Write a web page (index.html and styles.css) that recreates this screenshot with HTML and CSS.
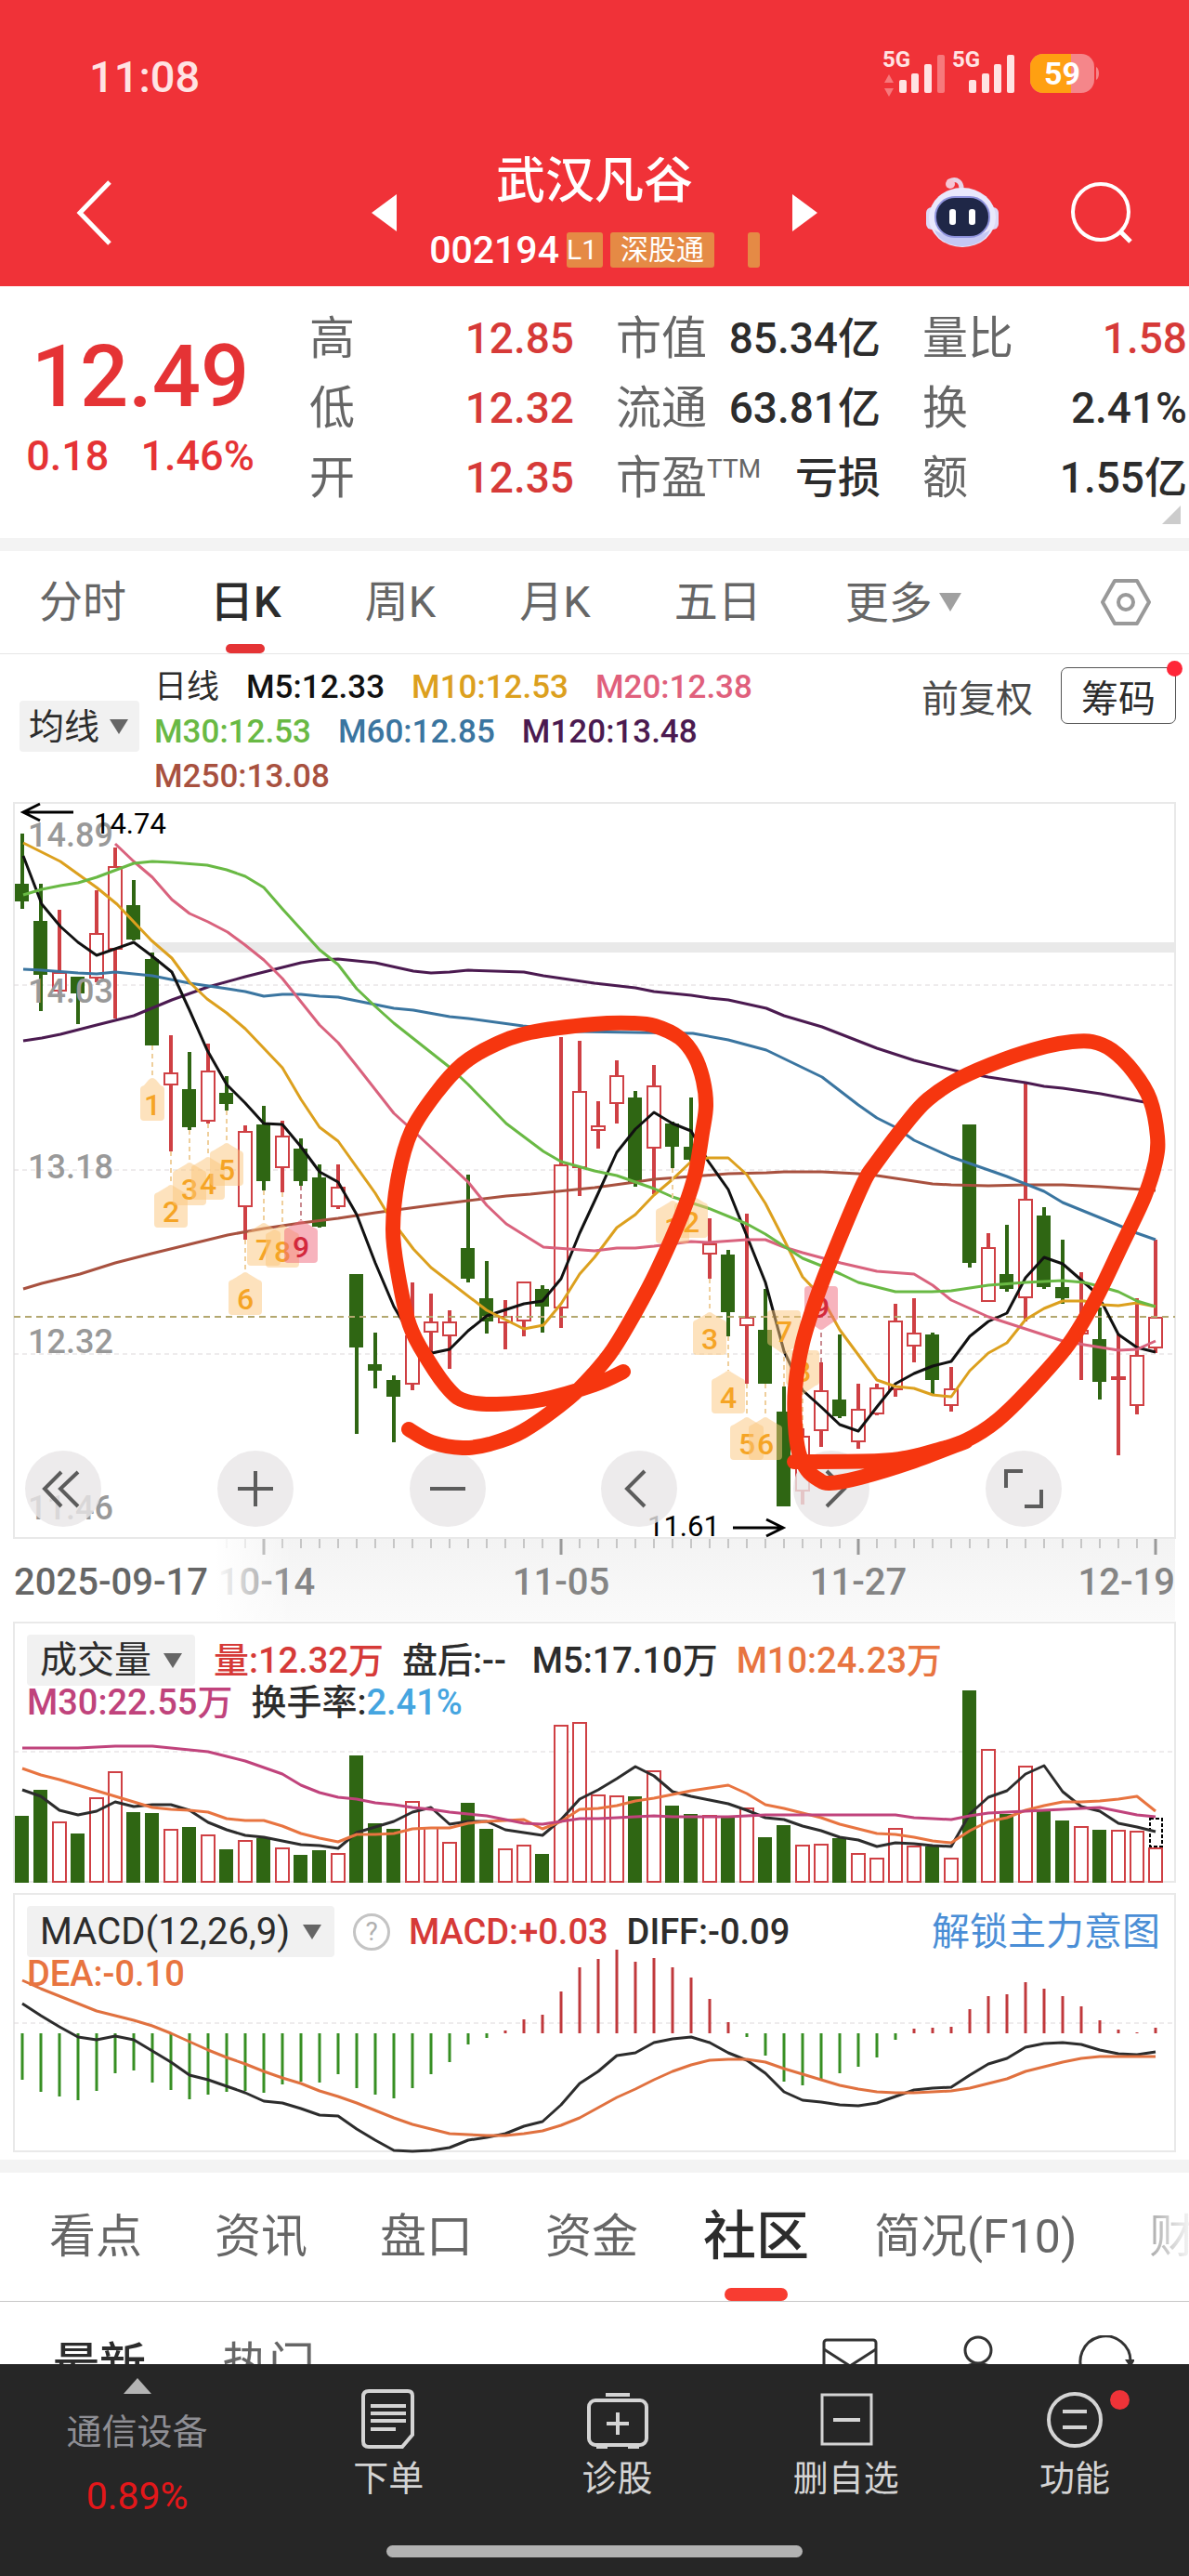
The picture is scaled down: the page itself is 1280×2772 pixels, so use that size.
FILE: index.html
```html
<!DOCTYPE html>
<html lang="zh-CN">
  <head>
    <meta charset="UTF-8" />
    <meta name="viewport" content="width=device-width" />
    <title>武汉凡谷 002194</title>
    <link rel="stylesheet" href="styles.css">
  </head>
  <body>
    <header class="top">
      <div class="status-bar">
        <span class="clock">11:08</span>
        <svg class="status-icons" width="236" height="72" viewBox="0 -6 236 72">
          <g fill="#ffe3e3">
            <text x="0" y="20" class="net">5G</text>
            <text x="75" y="20" class="net">5G</text>
            <path d="M2 37l5-9 5 9zM2 43l5 9 5-9z" opacity=".4" />
            <rect x="18" y="34" width="8" height="14" rx="2" />
            <rect x="31" y="27" width="8" height="21" rx="2" />
            <rect x="45" y="17" width="8" height="31" rx="2" />
            <rect x="59" y="7" width="8" height="41" rx="2" opacity=".4" />
            <rect x="93" y="34" width="8" height="14" rx="2" />
            <rect x="107" y="27" width="8" height="21" rx="2" />
            <rect x="120" y="17" width="8" height="31" rx="2" />
            <rect x="134" y="7" width="8" height="41" rx="2" />
          </g>
          <rect x="159" y="6" width="69" height="42" rx="14" fill="#f5868a" />
          <path d="M173 6h30v42h-30a14 14 0 0 1-14-14V20a14 14 0 0 1 14-14z" fill="#ffa011" />
          <path d="M230 20c4 2 4 12 0 14z" fill="#f5868a" />
          <text x="174" y="39" class="battery">59</text>
        </svg>
      </div>
      <div class="title-bar">
        <button class="icon-btn" aria-label="返回">
          <svg width="44" height="72" viewBox="0 0 44 72"><path d="M38 3L6 36l32 33" fill="none" stroke="#fff" stroke-width="5" /></svg>
        </button>
        <div class="stock">
          <button class="icon-btn" aria-label="上一只">
            <svg width="27" height="40" viewBox="0 0 27 40"><path d="M27 0v40L0 20z" fill="#fff" /></svg>
          </button>
          <div class="stock-name">
            <h1>武汉凡谷</h1>
            <div class="stock-code">
              <span>002194</span>
              <span class="tag tag-cut">L1</span>
              <span class="tag">深股通</span>
              <span class="tag tag-edge"></span>
            </div>
          </div>
          <button class="icon-btn" aria-label="下一只">
            <svg width="27" height="40" viewBox="0 0 27 40"><path d="M0 0v40l27-20z" fill="#fff" /></svg>
          </button>
        </div>
        <div class="title-actions">
          <button class="icon-btn" aria-label="智能助手">
            <svg width="80" height="76" viewBox="0 0 80 76">
              <path d="M26 4c8-4 14 1 13 10" fill="none" stroke="#e7d3e6" stroke-width="5" stroke-linecap="round" />
              <circle cx="27" cy="7" r="5" fill="#f6c5d4" />
              <rect x="1" y="32" width="12" height="24" rx="6" fill="#dcd9f6" />
              <rect x="67" y="32" width="12" height="24" rx="6" fill="#dcd9f6" />
              <ellipse cx="40" cy="43" rx="36" ry="32" fill="#e9e8fc" />
              <path d="M10 56c8 24 52 24 60 0-14 11-46 11-60 0z" fill="#c5c8f4" />
              <rect x="11" y="21" width="58" height="43" rx="21" fill="#1f2747" stroke="#8f93dd" stroke-width="2" />
              <rect x="26" y="34" width="7" height="17" rx="3" fill="#fff" />
              <rect x="47" y="34" width="7" height="17" rx="3" fill="#fff" />
            </svg>
          </button>
          <button class="icon-btn" aria-label="搜索">
            <svg width="68" height="68" viewBox="0 0 68 68"><g fill="none" stroke="#fff" stroke-width="4"><circle cx="33" cy="33" r="30" /><path d="M54 54l11 11" stroke-width="5" /></g></svg>
          </button>
        </div>
      </div>
    </header>

    <section class="quote">
      <div class="price">
        <strong>12.49</strong>
        <div class="change"><span>0.18</span><span>1.46%</span></div>
      </div>
      <dl class="stats">
        <div><dt>高</dt><dd class="up">12.85</dd></div>
        <div><dt>低</dt><dd class="up">12.32</dd></div>
        <div><dt>开</dt><dd class="up">12.35</dd></div>
      </dl>
      <dl class="stats">
        <div><dt>市值</dt><dd>85.34亿</dd></div>
        <div><dt>流通</dt><dd>63.81亿</dd></div>
        <div><dt>市盈<sup>TTM</sup></dt><dd>亏损</dd></div>
      </dl>
      <dl class="stats">
        <div><dt>量比</dt><dd class="up">1.58</dd></div>
        <div><dt>换</dt><dd>2.41%</dd></div>
        <div><dt>额</dt><dd>1.55亿</dd></div>
      </dl>
    </section>

    <nav class="period-tabs">
      <a href="#">分时</a>
      <a href="#" class="active">日K</a>
      <a href="#">周K</a>
      <a href="#">月K</a>
      <a href="#">五日</a>
      <span class="more"><select aria-label="更多周期"><option>更多</option></select></span>
      <button class="icon-btn settings" aria-label="设置">
        <svg width="54" height="54" viewBox="0 0 54 54"><g fill="none" stroke="#999" stroke-width="4" stroke-linejoin="round"><path d="M15 4h24l13 23-13 23H15L2 27z" /><circle cx="27" cy="27" r="8" /></g></svg>
      </button>
    </nav>

    <section class="ma-bar">
      <span class="picker"><select aria-label="主图指标"><option>均线</option></select></span>
      <div class="ma-legend">
        <div><span class="c-dark">日线</span><span class="c-m5">M5:12.33</span><span class="c-m10">M10:12.53</span><span class="c-m20">M20:12.38</span></div>
        <div><span class="c-m30">M30:12.53</span><span class="c-m60">M60:12.85</span><span class="c-m120">M120:13.48</span></div>
        <div><span class="c-m250">M250:13.08</span></div>
      </div>
      <div class="ma-actions">
        <button class="plain-btn">前复权</button>
        <button class="chips-btn">筹码</button>
      </div>
    </section>

    <main class="charts">
      <div class="k-chart">
        <svg id="kline" class="chart" viewBox="15 863 1250 792"></svg>
        <div class="zoom-bar">
          <button aria-label="最早"><svg viewBox="0 0 82 82"><path d="M39 23L21 41l18 19M57 23L38 41l19 19" /></svg></button>
          <button aria-label="放大"><svg viewBox="0 0 82 82"><path d="M41 22v38M22 41h38" /></svg></button>
          <button aria-label="缩小"><svg viewBox="0 0 82 82"><path d="M22 41h38" /></svg></button>
          <button aria-label="向左"><svg viewBox="0 0 82 82"><path d="M47 22L28 41l19 19" /></svg></button>
          <button aria-label="向右"><svg viewBox="0 0 82 82"><path d="M36 22l19 19-19 19" /></svg></button>
          <button aria-label="全屏"><svg viewBox="0 0 82 82"><path d="M22 40V22h18M60 42v18H42" /></svg></button>
        </div>
        <svg id="marks" class="chart marks" viewBox="15 863 1250 792"></svg>
      </div>
      <svg id="axis" class="chart" viewBox="15 1655 1250 90"></svg>

      <div class="sub-chart">
        <svg id="volume" class="chart" viewBox="15 1745 1250 281"></svg>
        <div class="sub-legend">
          <div class="legend-row">
            <span class="picker"><select aria-label="副图指标一"><option>成交量</option></select></span>
            <span class="up">量:12.32万</span>
            <span class="after">盘后:--</span>
            <span>M5:17.10万</span>
            <span class="c-orange">M10:24.23万</span>
          </div>
          <div class="legend-row second">
            <span class="c-magenta">M30:22.55万</span>
            <span>换手率:<b class="c-sky">2.41%</b></span>
          </div>
        </div>
      </div>

      <div class="sub-chart">
        <svg id="macd" class="chart" viewBox="15 2037 1250 279"></svg>
        <div class="sub-legend">
          <div class="legend-row">
            <span class="picker"><select aria-label="副图指标二"><option>MACD(12,26,9)</option></select></span>
            <button class="help" aria-label="指标说明">?</button>
            <span class="up">MACD:+0.03</span>
            <span>DIFF:-0.09</span>
            <a href="#" class="unlock">解锁主力意图</a>
          </div>
          <div class="legend-row second"><span class="c-orange">DEA:-0.10</span></div>
        </div>
      </div>
    </main>

    <nav class="info-tabs">
      <a href="#">看点</a>
      <a href="#">资讯</a>
      <a href="#">盘口</a>
      <a href="#">资金</a>
      <a href="#" class="active">社区</a>
      <a href="#">简况(F10)</a>
      <a href="#" class="faded">财</a>
    </nav>

    <section class="feed-head">
      <a href="#" class="active">最新</a>
      <a href="#">热门</a>
      <div class="feed-actions">
        <button class="icon-btn" aria-label="消息"><svg width="60" height="56" viewBox="0 0 60 56"><g fill="none" stroke="#333" stroke-width="3"><rect x="2" y="5" width="56" height="44" rx="3" /><path d="M2 15l28 18 28-18" /></g></svg></button>
        <button class="icon-btn" aria-label="我的"><svg width="60" height="56" viewBox="0 0 60 56"><g fill="none" stroke="#333" stroke-width="3"><circle cx="30" cy="16" r="14" /><path d="M4 56c0-34 52-34 52 0" /></g></svg></button>
        <button class="icon-btn" aria-label="刷新"><svg width="60" height="56" viewBox="0 0 60 56"><path d="M6 42A27 27 0 1 1 56 29" fill="none" stroke="#333" stroke-width="3" /><path d="M50 26h11l-5 9z" fill="#333" /></svg></button>
      </div>
    </section>

    <nav class="bottom-nav">
      <a href="#" class="sector">
        <svg width="30" height="17" viewBox="0 0 30 17"><path d="M15 0l15 17H0z" fill="#b4b4b4" /></svg>
        <span>通信设备</span>
        <em>0.89%</em>
      </a>
      <a href="#">
        <svg width="66" height="66" viewBox="0 0 66 66"><g fill="none" stroke="#d4d4d4" stroke-width="4"><path d="M12 3h42q5 0 5 5v42L48 63H12q-6 0-6-6V9q0-6 6-6z" /><path d="M14 19h38M14 27h38M14 35h38M14 44h27" /></g></svg>
        <span>下单</span>
      </a>
      <a href="#">
        <svg width="66" height="66" viewBox="0 0 66 66"><g fill="none" stroke="#d4d4d4" stroke-width="4"><rect x="2" y="13" width="62" height="48" rx="7" /><path d="M20 7h26M33 26v24M21 38h24M10 63h12M44 63h12" /></g></svg>
        <span>诊股</span>
      </a>
      <a href="#">
        <svg width="66" height="66" viewBox="0 0 66 66"><g fill="none" stroke="#d4d4d4" stroke-width="3"><rect x="7" y="7" width="53" height="53" /><path d="M19 34h29" stroke-width="4" /></g></svg>
        <span>删自选</span>
      </a>
      <a href="#" class="has-dot">
        <svg width="66" height="66" viewBox="0 0 66 66"><g fill="none" stroke="#d4d4d4" stroke-width="4"><circle cx="33" cy="34" r="28" /><path d="M20 25h26M20 42h26" /></g></svg>
        <span>功能</span>
      </a>
      <div class="home-bar"></div>
    </nav>

    <script src="chart.js"></script>
  </body>
</html>
```
FILE: styles.css
```css
* {
  box-sizing: border-box;
}
body {
  margin: 0;
  min-height: 100vh;
  background: #fff;
  color: #2c2c2c;
  font-family: Roboto, "Noto Sans CJK SC", sans-serif;
  font-size: 38px;
}
a {
  color: inherit;
  text-decoration: none;
}
button,
select {
  font: inherit;
  color: inherit;
  border: none;
  background: none;
  padding: 0;
  margin: 0;
  cursor: pointer;
}
select {
  appearance: none;
}
.icon-btn {
  display: flex;
}
.up {
  color: #d63a38;
}

/* header */
.top {
  height: 308px;
  background: #f03238;
  color: #fff;
}
.status-bar {
  display: flex;
  justify-content: space-between;
  align-items: center;
  height: 150px;
  padding: 14px 94px 0 96px;
}
.clock {
  font-size: 47px;
  font-weight: 500;
  color: #ffe3e3;
}
.net {
  font-size: 24px;
  font-weight: 700;
}
.battery {
  font-size: 34px;
  font-weight: 700;
  fill: #fff;
}
.title-bar {
  display: grid;
  grid-template-columns: 1fr 480px 1fr;
  align-items: center;
  height: 158px;
}
.title-bar > .icon-btn {
  margin-left: 80px;
}
.stock {
  display: flex;
  align-items: center;
}
.stock-name {
  flex: 1;
  text-align: center;
}
.stock-name h1 {
  margin: 0;
  font-size: 53px;
  line-height: 80px;
  font-weight: 500;
}
.stock-code {
  display: flex;
  align-items: center;
  justify-content: flex-end;
  height: 68px;
  margin-right: 35px;
  gap: 8px;
  font-size: 41px;
  font-weight: 500;
}
.tag {
  height: 38px;
  padding: 0 11px;
  background: #e58a45;
  border-radius: 3px;
  font-size: 30px;
  line-height: 38px;
  font-weight: 400;
}
.tag-cut {
  padding: 0 6px 0 0;
}
.tag-edge {
  width: 13px;
  padding: 0;
  margin-left: 28px;
}
.title-actions {
  display: flex;
  align-items: center;
  justify-content: flex-end;
  gap: 76px;
  padding-right: 60px;
}

/* quote */
.quote {
  display: grid;
  grid-template-columns: 288fr 285fr 285fr 285fr;
  gap: 45px;
  padding: 19px 2px 27px 0;
  border-bottom: 14px solid #f3f3f3;
  position: relative;
}
.quote::after {
  content: "";
  position: absolute;
  right: 9px;
  bottom: 15px;
  border-left: 20px solid transparent;
  border-bottom: 20px solid #ccc;
}
.price {
  display: flex;
  flex-direction: column;
  align-items: center;
  padding: 24px 0 0 14px;
  color: #e53335;
}
.price strong {
  font-size: 92px;
  line-height: 110px;
  font-weight: 500;
}
.change {
  display: flex;
  gap: 34px;
  font-size: 45px;
  line-height: 60px;
  font-weight: 500;
}
.stats {
  margin: 0;
}
.stats div {
  display: flex;
  justify-content: space-between;
  line-height: 75px;
}
.stats dt {
  font-size: 49px;
  color: #666;
}
.stats dd {
  margin: 0;
  font-size: 46px;
  font-weight: 500;
}
.stats sup {
  font-size: 28px;
  line-height: 0;
}

/* period tabs */
.period-tabs {
  display: flex;
  align-items: center;
  gap: 90px;
  height: 111px;
  padding: 0 41px 0 42px;
  border-bottom: 1px solid #e6e6e6;
  font-size: 47px;
  color: #666;
}
.period-tabs a {
  line-height: 110px;
  position: relative;
}
.period-tabs .active {
  color: #2c2c2c;
  font-weight: 500;
}
.period-tabs .active::after {
  content: "";
  position: absolute;
  left: 50%;
  bottom: 0;
  width: 42px;
  height: 10px;
  margin-left: -21px;
  border-radius: 5px;
  background: #e53335;
}
.more,
.picker {
  display: flex;
  align-items: center;
  gap: 13px;
}
.more {
  gap: 7px;
}
.more::after,
.picker::after {
  content: "";
  border: 10px solid transparent;
  border-top: 16px solid #666;
  border-bottom: 0;
}
.more::after {
  border-width: 20px 12px 0;
  border-top-color: #a0a0a0;
}
.settings {
  margin-left: auto;
}

/* moving average bar */
.ma-bar {
  display: flex;
  height: 159px;
  padding: 0 14px 0 21px;
}
.picker {
  background: #f1f1f1;
  border-radius: 4px;
  height: 55px;
  padding: 0 14px 0 12px;
}
.ma-bar .picker {
  margin-top: 50px;
  gap: 10px;
  padding: 0 12px 0 10px;
}
.ma-legend {
  margin-left: 16px;
  padding-top: 12px;
  font-size: 35px;
  line-height: 48px;
  font-weight: 500;
  white-space: nowrap;
}
.ma-legend div {
  display: flex;
  gap: 29px;
}
.c-dark {
  font-weight: 400;
}
.c-m5 {
  color: #111;
}
.c-m10 {
  color: #dca01e;
}
.c-m20 {
  color: #e0607c;
}
.c-m30 {
  color: #69b944;
}
.c-m60 {
  color: #3a75a0;
}
.c-m120 {
  color: #4b1a50;
}
.c-m250 {
  color: #a8513f;
}
.c-orange {
  color: #e87440;
}
.c-magenta {
  color: #c0437c;
}
.c-sky {
  color: #45a5e0;
  font-weight: 500;
}
.ma-actions {
  display: flex;
  align-items: flex-start;
  gap: 30px;
  margin-left: auto;
  padding-top: 14px;
  font-size: 40px;
}
.plain-btn {
  height: 61px;
  color: #4a4a4a;
}
.chips-btn {
  position: relative;
  width: 124px;
  height: 61px;
  border: 1px solid #555;
  border-radius: 7px;
}
.chips-btn::after {
  content: "";
  position: absolute;
  top: -8px;
  right: -8px;
  width: 17px;
  height: 17px;
  border-radius: 50%;
  background: #ff2638;
}

/* charts */
.charts {
  padding: 0 15px 8px;
  border-bottom: 14px solid #f3f3f3;
}
.chart {
  display: block;
  width: 100%;
  overflow: visible;
}
.k-chart,
.sub-chart {
  position: relative;
}
.sub-chart + .sub-chart {
  margin-top: 11px;
}
.marks {
  position: absolute;
  inset: 0;
  pointer-events: none;
}
.zoom-bar {
  position: absolute;
  left: 12px;
  right: 122px;
  bottom: 12px;
  display: flex;
  justify-content: space-between;
}
.zoom-bar button {
  width: 82px;
  height: 82px;
  border-radius: 50%;
  background: rgba(232, 230, 231, 0.8);
}
.zoom-bar svg {
  display: block;
  fill: none;
  stroke: #5c5c5c;
  stroke-width: 4;
}
.frame {
  fill: none;
  stroke: #e9e9e9;
  stroke-width: 2;
}
.grid {
  stroke: #ddd8da;
  stroke-width: 1;
  stroke-dasharray: 5 4;
}
.now-line {
  stroke: #b3a870;
  stroke-width: 2;
  stroke-dasharray: 7 5;
}
.line {
  fill: none;
  stroke-width: 3;
  stroke-linejoin: round;
}
.pen {
  fill: none;
  stroke: #f6360f;
  stroke-width: 16;
  stroke-linecap: round;
  stroke-linejoin: round;
}
.y-label {
  font-size: 36px;
  font-weight: 500;
  fill: #999;
}
.peak {
  font-size: 31px;
  fill: #000;
}
.seq {
  font-size: 32px;
  font-weight: 500;
  text-anchor: middle;
}
.date {
  font-size: 40px;
  font-weight: 500;
  fill: #858585;
}
.date.first {
  fill: #666;
}

/* legends over the sub charts */
.sub-legend {
  position: absolute;
  top: 14px;
  left: 14px;
  right: 16px;
  white-space: nowrap;
}
.legend-row {
  display: flex;
  align-items: center;
  gap: 20px;
  height: 55px;
  line-height: 50px;
}
.legend-row > span {
  font-weight: 500;
}
.legend-row > .picker {
  font-weight: 400;
  font-size: 40px;
  padding: 0 14px;
}
.legend-row .after {
  margin-right: 8px;
}
.legend-row.second {
  height: 37px;
  line-height: 37px;
}
.help {
  width: 40px;
  height: 40px;
  border: 3px solid #c4c4c4;
  border-radius: 50%;
  color: #b0b0b0;
  font-size: 28px;
  line-height: 32px;
}
.unlock {
  margin-left: auto;
  font-size: 41px;
  color: #4a8ed6;
}

/* info tabs */
.info-tabs {
  display: flex;
  align-items: center;
  gap: 78px;
  height: 139px;
  padding-left: 53px;
  border-bottom: 1px solid #c8c8c8;
  overflow: hidden;
  white-space: nowrap;
  font-size: 50px;
  line-height: 138px;
  color: #666;
}
.info-tabs .active {
  position: relative;
  margin: 0 -8px;
  font-size: 57px;
  font-weight: 500;
  color: #2c2c2c;
}
.info-tabs .active::after {
  content: "";
  position: absolute;
  left: 50%;
  bottom: 0;
  width: 68px;
  height: 14px;
  margin-left: -34px;
  border-radius: 7px;
  background: #f83c31;
}
.info-tabs .faded {
  background: linear-gradient(90deg, #aaa, #fff);
  background-clip: text;
  color: transparent;
}
.feed-head {
  display: flex;
  gap: 82px;
  padding: 36px 59px 0 57px;
  font-size: 50px;
  line-height: 64px;
  color: #666;
}
.feed-head .active {
  font-weight: 500;
  color: #2c2c2c;
}
.feed-actions {
  display: flex;
  gap: 78px;
  margin-left: auto;
}

/* bottom navigation */
.bottom-nav {
  position: fixed;
  left: 0;
  right: 0;
  bottom: 0;
  display: grid;
  grid-template-columns: 295fr 246fr 246fr 246fr 246fr;
  height: 228px;
  background: #262626;
  color: #d4d4d4;
}
.bottom-nav a {
  display: flex;
  flex-direction: column;
  align-items: center;
  gap: 3px;
  padding-top: 26px;
  line-height: 56px;
  position: relative;
}
.bottom-nav a.sector {
  gap: 13px;
  padding-top: 15px;
  color: #8e8e94;
}
.sector em {
  font-style: normal;
  font-size: 41px;
  color: #e3171a;
}
.has-dot::after {
  content: "";
  position: absolute;
  top: 28px;
  right: 64px;
  width: 21px;
  height: 21px;
  border-radius: 50%;
  background: #ee3338;
}
.home-bar {
  position: absolute;
  left: 50%;
  bottom: 20px;
  width: 35%;
  height: 13px;
  transform: translateX(-50%);
  border-radius: 7px;
  background: #b2b2b2;
}
```
FILE: chart.js
```js
const RED = "#cf4044";
const GREEN = "#2f6613";
const X0 = 24;
const STEP = 20;

// [up, high, low, body top, body bottom]
const candles = [
  [0,897,978,951,970],[0,951,1088,991,1049],[1,979,1070,1046,1067],[0,1051,1102,1051,1069],
  [1,958,1057,1004,1053],[1,912,1096,932,1022],[0,947,1012,974,1011],[0,1025,1125,1032,1125],
  [1,1114,1239,1154,1168],[0,1132,1216,1172,1213],[1,1123,1209,1152,1207],[0,1158,1195,1176,1188],
  [1,1211,1334,1217,1299],[0,1190,1281,1210,1271],[1,1206,1283,1222,1257],[0,1225,1276,1236,1271],
  [0,1253,1321,1267,1320],[1,1253,1301,1277,1299],[0,1371,1543,1371,1450],[0,1434,1494,1468,1475],
  [0,1480,1552,1485,1503],[1,1380,1496,1437,1490],[1,1392,1458,1422,1434],[1,1410,1473,1422,1438],
  [0,1264,1380,1343,1376],[0,1357,1435,1397,1422],[1,1399,1452,1416,1424],[1,1379,1438,1379,1422],
  [0,1383,1434,1387,1406],[1,1116,1429,1253,1408],[1,1120,1287,1174,1257],[1,1185,1236,1211,1217],
  [1,1141,1209,1157,1188],[0,1174,1277,1181,1272],[1,1146,1285,1168,1236],[0,1207,1257,1209,1234],
  [0,1181,1250,1234,1248],[1,1311,1376,1338,1350],[0,1345,1438,1350,1412],[1,1306,1489,1417,1427],
  [0,1387,1489,1431,1489],[0,1492,1621,1519,1621],[1,1537,1619,1545,1605],[1,1466,1557,1496,1540],
  [0,1436,1526,1506,1524],[1,1489,1559,1516,1552],[1,1489,1523,1493,1522],[1,1403,1503,1421,1496],
  [1,1397,1466,1434,1449],[0,1434,1500,1436,1485],[1,1471,1519,1494,1513],[0,1210,1364,1210,1359],
  [1,1327,1401,1342,1401],[0,1318,1390,1371,1387],[1,1166,1422,1290,1397],[0,1299,1387,1308,1385],
  [0,1334,1403,1385,1397],[1,1369,1485,1431,1436],[0,1407,1506,1441,1487],[1,1435,1566,1481,1485],
  [1,1397,1522,1458,1513],[1,1334,1456,1417,1451]
];

const averages = {
  "#a8513f": "25,1387 45,1381 86,1371 124,1359 163,1349 204,1339 245,1329 284,1322 324,1316 364,1311 404,1305 464,1297 504,1292 545,1287 571,1285 640,1278 684,1272 704,1269 744,1266 784,1263 825,1262 844,1261 885,1261 924,1263 944,1265 1004,1274 1024,1275 1064,1276 1104,1275 1144,1275 1185,1277 1244,1281",
  "#4b1a50": "25,1120 45,1117 65,1113 104,1103 144,1093 185,1076 224,1062 264,1051 304,1041 324,1036 344,1033 364,1032 404,1036 445,1045 464,1047 484,1046 504,1044 564,1046 585,1050 640,1058 684,1063 704,1067 744,1071 764,1074 784,1076 825,1085 844,1093 885,1105 944,1128 984,1141 1032,1153 1064,1159 1104,1165 1124,1169 1144,1171 1185,1177 1232,1186 1244,1188",
  "#3a75a0": "25,1043 45,1044 84,1047 104,1048 124,1046 164,1050 204,1058 245,1064 264,1067 284,1072 304,1070 324,1070 344,1072 364,1073 424,1085 445,1087 484,1094 504,1096 563,1104 620,1110 684,1111 746,1112 784,1119 825,1130 885,1159 924,1189 944,1203 964,1213 984,1227 1024,1245 1084,1266 1124,1282 1144,1294 1203,1318 1224,1327 1244,1334",
  "#111": "25,921 45,973 65,997 84,1014 104,1028 144,1014 164,1029 185,1046 204,1087 223,1130 244,1167 264,1187 284,1209 304,1210 324,1234 344,1261 364,1272 384,1307 404,1359 424,1406 444,1440 465,1456 484,1452 504,1432 524,1416 564,1403 584,1400 604,1376 624,1327 644,1284 664,1240 684,1215 704,1197 724,1209 744,1217 762,1249 784,1280 804,1330 824,1380 844,1454 864,1496 884,1514 904,1533 924,1540 944,1514 964,1489 984,1478 1004,1470 1024,1465 1044,1438 1064,1422 1084,1413 1104,1375 1124,1353 1144,1360 1175,1387 1187,1403 1204,1436 1224,1450 1244,1455",
  "#dca01e": "25,907 65,927 104,955 126,973 144,992 163,1012 185,1031 204,1057 223,1075 244,1090 264,1107 304,1149 324,1183 344,1213 364,1228 404,1284 416,1304 433,1328 445,1344 464,1364 524,1410 564,1430 585,1426 604,1403 624,1371 640,1353 664,1321 684,1307 704,1286 724,1269 744,1250 762,1246 784,1246 804,1264 824,1295 844,1334 864,1374 884,1395 904,1431 944,1485 964,1492 984,1494 1004,1501 1024,1503 1044,1475 1064,1456 1084,1445 1104,1420 1124,1408 1144,1400 1167,1400 1187,1404 1204,1405 1224,1402 1244,1406",
  "#d9627d": "124,908 144,927 164,944 185,968 204,983 224,992 245,1003 264,1017 284,1033 304,1053 324,1078 344,1103 364,1122 384,1147 424,1198 445,1217 504,1272 524,1297 545,1317 585,1342 640,1346 664,1343 684,1343 704,1341 744,1336 762,1337 804,1334 824,1334 844,1342 864,1348 905,1359 944,1368 984,1371 1004,1383 1024,1399 1064,1417 1104,1430 1144,1443 1167,1447 1204,1453 1224,1452 1244,1443",
  "#69b944": "25,963 45,957 65,953 84,950 104,944 144,929 164,927 185,928 223,931 244,936 264,943 284,955 304,978 324,1000 344,1022 364,1038 384,1064 404,1083 424,1101 486,1150 504,1167 545,1209 585,1239 604,1250 640,1260 664,1265 684,1272 704,1279 724,1288 762,1300 804,1317 824,1328 844,1341 864,1354 884,1362 905,1371 924,1380 964,1390 1003,1390 1024,1389 1064,1383 1104,1380 1144,1378 1167,1380 1183,1384 1204,1390 1224,1400 1244,1406"
};

// [candle index, number, top, tip points down]
const sequence = [
  [7,1,1160],[8,2,1275],[9,3,1251],[10,4,1245],[11,5,1230],[12,6,1369],[13,7,1316],[14,8,1318],[15,9,1313],
  [35,1,1292],[36,2,1286],[37,3,1412],[38,4,1475],[39,5,1525],[40,6,1525],[41,7,1410,1],[42,8,1453,1],[43,9,1384,1]
];

const volume = [585,512,600,635,533,460,575,578,622,617,637,679,653,648,674,695,682,689,416,606,622,543,617,658,549,622,677,667,693,329,321,525,528,531,458,557,580,583,591,563,645,612,666,663,648,690,704,620,670,672,703,233,398,580,445,573,598,615,625,625,627,674];
const vol5 = [513,530,570,583,572,547,558,554,554,570,604,625,640,646,656,666,669,677,632,617,602,575,563,608,600,602,624,633,640,597,537,512,480,447,473,518,531,541,551,570,590,596,613,628,645,653,671,660,664,668,671,580,534,514,468,444,518,558,571,606,617,629];
const vol10 = [452,471,484,499,516,531,547,562,567,570,575,593,598,599,614,635,648,658,638,637,635,622,619,619,606,602,598,596,623,600,567,565,556,544,536,526,516,508,499,522,553,564,577,591,608,622,635,637,645,656,661,628,600,590,570,557,547,546,543,538,530,573];
const vol30 = [395,395,395,395,391,389,389,389,395,400,405,418,432,449,467,499,519,533,539,548,555,561,568,574,580,586,597,605,608,600,594,594,590,588,586,587,588,588,588,585,584,583,583,583,583,583,583,583,590,593,596,585,577,575,571,570,567,564,562,573,582,587];

const macd = [1328,1362,1375,1385,1359,1310,1302,1334,1356,1383,1368,1362,1358,1364,1341,1333,1335,1312,1351,1370,1380,1350,1312,1277,1228,1209,1189,1158,1145,1079,1011,988,962,995,986,1012,1041,1099,1165,1207,1259,1333,1342,1325,1310,1291,1265,1214,1184,1180,1179,1128,1091,1087,1053,1071,1091,1121,1161,1186,1193,1181];
const diff = [1114,1148,1179,1208,1215,1205,1215,1246,1278,1314,1328,1346,1364,1387,1393,1408,1426,1430,1465,1497,1526,1529,1526,1518,1498,1490,1480,1458,1445,1398,1338,1305,1260,1252,1223,1212,1207,1224,1252,1273,1310,1361,1385,1391,1399,1401,1394,1374,1356,1352,1348,1314,1283,1267,1235,1225,1223,1228,1244,1254,1256,1249];
const dea = [1049,1071,1091,1114,1134,1147,1160,1177,1197,1220,1245,1264,1284,1304,1323,1339,1358,1374,1392,1413,1434,1452,1467,1478,1481,1483,1483,1480,1472,1456,1434,1407,1377,1353,1327,1304,1286,1272,1269,1271,1279,1295,1311,1327,1342,1353,1361,1364,1364,1362,1360,1352,1339,1324,1305,1290,1277,1268,1263,1263,1261,1261];

const px = (i) => X0 + STEP * i;
// indicator values to chart y
const py = (v) => Math.round(1730 + v / 2.613);

function bar(i, up, top, bottom) {
  const x = px(i) - 8;
  return up
    ? `<rect x="${x + 1}" y="${top + 1}" width="14" height="${Math.max(bottom - top - 2, 2)}" fill="#fff" stroke="${RED}" stroke-width="2"/>`
    : `<rect x="${x}" y="${top}" width="15" height="${bottom - top}" fill="${GREEN}"/>`;
}

function hline(y, cls) {
  return `<path class="${cls}" d="M15 ${y}H1265"/>`;
}

function frame(top, bottom) {
  return `<rect class="frame" x="15" y="${top}" width="1250" height="${bottom - top}"/>`;
}

function series(values, color) {
  const pts = values.map((v, i) => px(i) + "," + py(v)).join(" ");
  return `<polyline class="line" stroke="${color}" points="${pts}"/>`;
}

function drawKline() {
  let s = frame(864, 1655);
  s += '<rect x="164" y="1014" width="1101" height="11" fill="#e9e9e9"/>';
  s += hline(1060, "grid") + hline(1259, "grid") + hline(1457, "grid");
  candles.forEach(([up, high, low, top, bottom], i) => {
    s += `<path d="M${px(i)} ${high}V${low}" stroke="${up ? RED : GREEN}" stroke-width="4"/>`;
    s += bar(i, up, top, bottom);
  });
  s += hline(1417, "now-line");
  for (const color in averages) {
    s += `<polyline class="line" stroke="${color}" points="${averages[color]}"/>`;
  }
  sequence.forEach(([i, n, top, down]) => {
    const x = px(i);
    const w = n === 1 && i === 7 ? 13 : 18;
    const color = n === 9 ? "#f0677c" : "#fbc67c";
    const from = down ? candles[i][1] : candles[i][2];
    const to = down ? top + 46 : top;
    const shape = down
      ? `M${x - w} ${top + 4}q0-4 4-4H${x + w - 4}q4 0 4 4V${top + 34}q0 3-4 4L${x + 4} ${top + 45}q-4 4-8 0L${x - w + 4} ${top + 38}q-4-1-4-4z`
      : `M${x - w} ${top + 12}q0-3 4-4L${x - 4} ${top + 2}q4-4 8 0L${x + w - 4} ${top + 8}q4 1 4 4V${top + 42}q0 4-4 4H${x - w + 4}q-4 0-4-4z`;
    s += `<path d="M${x} ${from}V${to}" stroke="${n === 9 ? "#c98a90" : "#efcf9c"}" stroke-width="2" stroke-dasharray="5 4"/>`;
    s += `<path d="${shape}" fill="${color}" opacity=".5"/>`;
    s += `<text class="seq" x="${x}" y="${top + (down ? 34 : 40)}" fill="${n === 9 ? "#d3283c" : "#f5a425"}">${n}</text>`;
  });
  [["14.89", 911], ["14.03", 1079], ["13.18", 1268], ["12.32", 1456], ["11.46", 1635]].forEach(([t, y]) => {
    s += `<text class="y-label" x="30" y="${y}">${t}</text>`;
  });
  s += '<path d="M79 874H26M43 865L25 874l18 9M789 1644h53M825 1635l18 9-18 9" fill="none" stroke="#000" stroke-width="3"/>';
  s += '<text class="peak" x="101" y="897">14.74</text><text class="peak" x="697" y="1653">11.61</text>';
  document.getElementById("kline").innerHTML = s;
}

// rounds a list of points into one curve
function smooth(points) {
  const p = points.split(" ").map((q) => q.split(",").map(Number));
  let d = "M" + p[0];
  for (let i = 0; i < p.length - 1; i++) {
    const a = p[i - 1] || p[i];
    const b = p[i];
    const c = p[i + 1];
    const e = p[i + 2] || c;
    d += `C${b[0] + (c[0] - a[0]) / 6},${b[1] + (c[1] - a[1]) / 6} ${c[0] - (e[0] - b[0]) / 6},${c[1] - (e[1] - b[1]) / 6} ${c}`;
  }
  return `<path class="pen" d="${d}"/>`;
}

function drawMarks() {
  document.getElementById("marks").innerHTML =
    smooth("671,1476 640,1490 584,1506 535,1511 502,1508 484,1496 461,1464 441,1426 428,1368 423,1322 429,1265 443,1217 469,1177 498,1145 531,1125 571,1111 640,1102 681,1101 705,1104 732,1117 748,1137 757,1163 760,1190 756,1219 748,1265 734,1307 707,1368 685,1410 660,1452 640,1477 612,1505 563,1540 527,1554 498,1558 465,1552 440,1538") +
    smooth("855,1573 946,1572 979,1568 1007,1561 1040,1550 1073,1529 1109,1494 1150,1447 1179,1399 1207,1341 1232,1288 1244,1250 1246,1223 1238,1183 1220,1153 1197,1130 1176,1121 1154,1121 1126,1126 1081,1140 1032,1161 999,1183 977,1207 942,1253 930,1272 905,1330 881,1391 864,1445 856,1494 856,1533 860,1563 869,1582 881,1592 893,1596 926,1590 979,1574 1040,1551");
}

function drawAxis() {
  let s = '<defs><linearGradient id="sky" x2="0" y2="1"><stop offset="0" stop-color="#f3f3f3"/><stop offset="1" stop-color="#fafafa"/></linearGradient>';
  s += '<linearGradient id="fade"><stop offset=".72" stop-color="#fff"/><stop offset="1" stop-color="#fff" stop-opacity="0"/></linearGradient></defs>';
  s += '<rect x="15" y="1656" width="1250" height="88" fill="url(#sky)"/>';
  for (let i = 11; i < 62; i++) {
    const major = i % 16 === 13;
    s += `<path d="M${px(i)} 1656v${major ? 17 : 10}" stroke="#999" stroke-width="${major ? 3 : 1}"/>`;
  }
  s += '<text class="date" x="287" y="1716" text-anchor="middle">10-14</text>';
  s += '<rect x="15" y="1656" width="300" height="88" fill="url(#fade)"/>';
  s += '<text class="date first" x="15" y="1716">2025-09-17</text>';
  s += '<text class="date" x="604" y="1716" text-anchor="middle">11-05</text>';
  s += '<text class="date" x="924" y="1716" text-anchor="middle">11-27</text>';
  s += '<text class="date" x="1265" y="1716" text-anchor="end">12-19</text>';
  document.getElementById("axis").innerHTML = s;
}

function drawVolume() {
  let s = frame(1746, 2025) + hline(py(405), "grid");
  volume.forEach((v, i) => {
    s += bar(i, candles[i][0], py(v), 2026);
  });
  s += '<rect x="1238" y="1957" width="13" height="30" fill="none" stroke="#000" stroke-width="2" stroke-dasharray="4 2"/>';
  s += series(vol5, "#2c2c2c") + series(vol10, "#e87440") + series(vol30, "#c0437c");
  document.getElementById("volume").innerHTML = s;
}

function drawMacd() {
  const zero = 2188;
  let s = frame(2038, 2315) + hline(py(1168), "grid");
  macd.forEach((v, i) => {
    s += `<path d="M${px(i)} ${zero}V${py(v)}" stroke="${py(v) < zero ? "#c0393c" : "#378f23"}" stroke-width="3"/>`;
  });
  s += series(diff, "#2c2c2c") + series(dea, "#e0713f");
  document.getElementById("macd").innerHTML = s;
}

drawKline();
drawMarks();
drawAxis();
drawVolume();
drawMacd();
```
